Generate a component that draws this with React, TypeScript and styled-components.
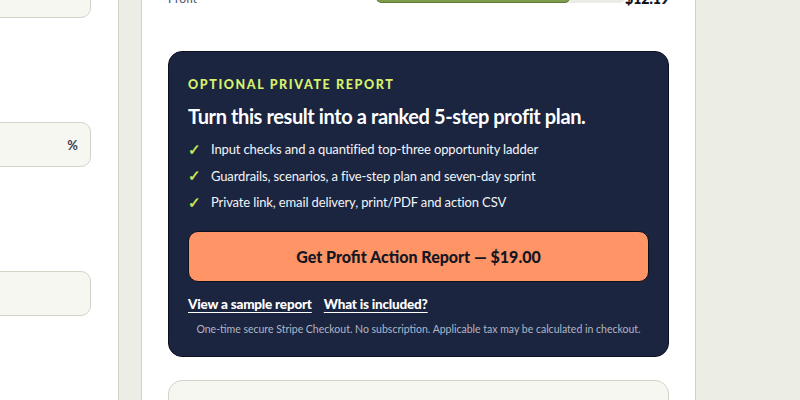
import styled, { createGlobalStyle } from "styled-components";

const GlobalStyle = createGlobalStyle`
  html, body {
    margin: 0;
    padding: 0;
    background: #eceee5;
    height: 400px;
    overflow: hidden;
  }
  body {
    font-family: Lato, "Open Sans", sans-serif;
    color: #1c2333;
  }
`;

const Page = styled.div`
  display: flex;
  align-items: flex-start;
  margin-left: -181px;
  margin-top: -40px;
  height: 460px;
`;

const SidePanel = styled.aside`
  width: 300px;
  height: 100%;
  flex: none;
  background: #ffffff;
  border-right: 1px solid #cfd0c6;
  padding: 0 27px 0 0;
  box-sizing: border-box;
  display: flex;
  flex-direction: column;
`;

const Field = styled.div<{ $top: number }>`
  margin-top: ${({ $top }) => $top}px;
  height: 45px;
  background: #f7f7f2;
  border: 1px solid #d3d3c9;
  border-radius: 10px;
  box-sizing: border-box;
  display: flex;
  align-items: center;
  justify-content: flex-end;
  padding: 0 12px;
  font-size: 13px;
  font-weight: 700;
  color: #3a4256;
`;

const Gutter = styled.div`
  width: 22px;
  flex: none;
`;

const MainPanel = styled.main`
  width: 555px;
  height: 100%;
  flex: none;
  background: #ffffff;
  border-left: 1px solid #cfd0c6;
  border-right: 1px solid #cfd0c6;
  box-sizing: border-box;
  padding: 0 26px;
`;

const MetricRow = styled.div`
  display: grid;
  grid-template-columns: 208px 249px 1fr;
  align-items: center;
  height: 20px;
  margin-top: 28px;
  font-size: 12px;
`;

const MetricLabel = styled.span`
  color: #4b5163;
`;

const Track = styled.div`
  height: 10px;
  background: #ececE6;
  border-radius: 6px;
  overflow: hidden;
`;

const Fill = styled.div`
  height: 100%;
  background: #7f9c4c;
  border: 1px solid #5e7a33;
  box-sizing: border-box;
  border-radius: 6px;
`;

const MetricValue = styled.span`
  text-align: right;
  font-size: 14px;
  font-weight: 800;
  color: #111522;
`;

const ReportCard = styled.section`
  margin-top: 43px;
  background: #1b2540;
  border: 1px solid #0c1120;
  border-radius: 14px;
  padding: 25px 19px 0;
  height: 306px;
  box-sizing: border-box;
  color: #ffffff;
`;

const Eyebrow = styled.div`
  font-size: 12.5px;
  font-weight: 900;
  letter-spacing: 0.13em;
  color: #d7f36b;
  line-height: 16px;
`;

const Heading = styled.h2`
  margin: 9px 0 6px;
  font-size: 20px;
  font-weight: 700;
  letter-spacing: -0.02em;
  line-height: 28px;
  color: #ffffff;
`;

const Checklist = styled.ul`
  list-style: none;
  margin: 0;
  padding: 0;
  display: flex;
  flex-direction: column;
`;

const CheckItem = styled.li`
  display: flex;
  align-items: center;
  gap: 13px;
  height: 26.5px;
  font-size: 13px;
  letter-spacing: -0.01em;
  color: #f4f5f8;
`;

const Tick = styled.span`
  width: 10px;
  color: #c5e84e;
  font-weight: 900;
  font-size: 15px;
`;

const BuyButton = styled.button`
  margin-top: 15px;
  width: 100%;
  height: 51px;
  background: #ff9466;
  border: 1px solid #0d111c;
  border-radius: 10px;
  font-family: Lato, "Open Sans", sans-serif;
  font-size: 16px;
  font-weight: 900;
  color: #141722;
  cursor: pointer;
`;

const LinkRow = styled.div`
  display: flex;
  gap: 12px;
  margin-top: 14px;
`;

const TextLink = styled.a`
  font-size: 13.5px;
  font-weight: 900;
  letter-spacing: -0.015em;
  color: #ffffff;
  text-decoration: underline;
  text-underline-offset: 3px;
  text-decoration-thickness: 1px;
`;

const FinePrint = styled.p`
  margin: 11px 0 0;
  text-align: center;
  font-size: 10.5px;
  color: #b0b6c6;
`;

const NextCard = styled.section`
  margin-top: 23px;
  height: 60px;
  background: #f7f7f2;
  border: 1px solid #d3d3c9;
  border-radius: 14px;
`;

const features = [
  "Input checks and a quantified top-three opportunity ladder",
  "Guardrails, scenarios, a five-step plan and seven-day sprint",
  "Private link, email delivery, print/PDF and action CSV",
];

export default function App() {
  return (
    <>
      <GlobalStyle />
      <Page>
        <SidePanel>
          <Field $top={13} />
          <Field $top={104}>%</Field>
          <Field $top={104} />
        </SidePanel>
        <Gutter />
        <MainPanel>
          <MetricRow>
            <MetricLabel>Profit</MetricLabel>
            <Track>
              <Fill style={{ width: "78%" }} />
            </Track>
            <MetricValue>$12.19</MetricValue>
          </MetricRow>
          <ReportCard>
            <Eyebrow>OPTIONAL PRIVATE REPORT</Eyebrow>
            <Heading>Turn this result into a ranked 5-step profit plan.</Heading>
            <Checklist>
              {features.map((f) => (
                <CheckItem key={f}>
                  <Tick>✓</Tick>
                  {f}
                </CheckItem>
              ))}
            </Checklist>
            <BuyButton>Get Profit Action Report — $19.00</BuyButton>
            <LinkRow>
              <TextLink href="#sample">View a sample report</TextLink>
              <TextLink href="#included">What is included?</TextLink>
            </LinkRow>
            <FinePrint>
              One-time secure Stripe Checkout. No subscription. Applicable tax may be calculated in checkout.
            </FinePrint>
          </ReportCard>
          <NextCard />
        </MainPanel>
      </Page>
    </>
  );
}
